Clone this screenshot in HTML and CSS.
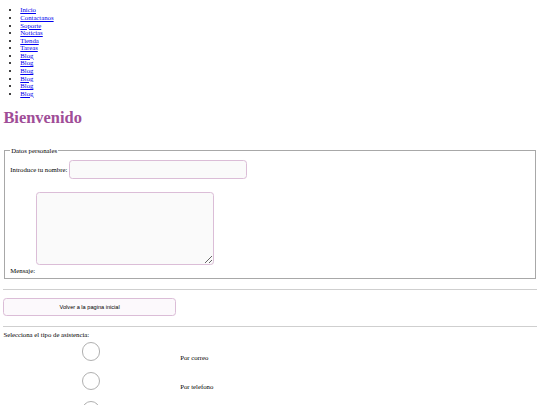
FILE: index.html
```html
<!DOCTYPE html>
<html lang="es">
<head>
<meta charset="utf-8">
<title>Bienvenido</title>
<link rel="stylesheet" href="styles.css">
</head>
<body>
<ul class="menu">
  <li><a href="#">Inicio</a></li>
  <li><a href="#">Contactanos</a></li>
  <li><a href="#">Soporte</a></li>
  <li><a href="#">Noticias</a></li>
  <li><a href="#">Tienda</a></li>
  <li><a href="#">Tareas</a></li>
  <li><a href="#">Blog</a></li>
  <li><a href="#">Blog</a></li>
  <li><a href="#">Blog</a></li>
  <li><a href="#">Blog</a></li>
  <li><a href="#">Blog</a></li>
  <li><a href="#">Blog</a></li>
</ul>
<h1 class="title">Bienvenido</h1>
<form class="form">
  <fieldset class="datos">
    <legend>Datos personales</legend>
    <div class="row-nombre">
      <label for="nombre">Introduce tu nombre:</label>
      <input class="campo" type="text" id="nombre">
    </div>
    <div class="row-mensaje">
      <label for="mensaje">Mensaje:</label>
      <textarea class="area" id="mensaje"></textarea>
    </div>
  </fieldset>
  <hr class="sep sep-1">
  <button class="boton" type="button">Volver a la pagina inicial</button>
  <hr class="sep sep-2">
  <p class="pregunta">Selecciona el tipo de asistencia:</p>
  <div class="opcion">
    <input class="radio" type="radio" name="tipo" id="correo">
    <label for="correo">Por correo</label>
  </div>
  <div class="opcion">
    <input class="radio" type="radio" name="tipo" id="telefono">
    <label for="telefono">Por telefono</label>
  </div>
  <div class="opcion">
    <input class="radio" type="radio" name="tipo" id="chat">
    <label for="chat">Por chat</label>
  </div>
</form>
</body>
</html>
```

FILE: styles.css
```css
html {
  zoom: 0.421875;
}

body {
  margin: 8px;
  font-family: "Liberation Serif", "Times New Roman", serif;
  font-size: 16px;
  color: #000;
  background: #fff;
}

.menu {
  margin: 7px 0 0;
  padding-left: 40px;
  line-height: 18px;
}

.menu a {
  color: #0000ee;
}

.title {
  margin: 25px 0 46px;
  font-size: 39px;
  line-height: 46px;
  font-weight: bold;
  color: #a04d97;
}

.form {
  margin: 0;
}

.datos {
  margin: 0 2px;
  padding: 5px 12px 8px;
  border: 2px solid #a8a8a8;
}

.datos legend {
  padding: 0 2px;
}

.row-nombre {
  display: flex;
  align-items: center;
  gap: 3px;
  margin-top: 9px;
}

.campo {
  box-sizing: border-box;
  width: 424px;
  height: 45px;
  margin: 0;
  border: 2px solid #dbbdd7;
  border-radius: 8px;
  background: #fafafa;
}

.row-mensaje {
  display: flex;
  align-items: flex-end;
  gap: 2px;
  margin-top: 32px;
}

.area {
  box-sizing: border-box;
  width: 422px;
  height: 172px;
  margin: 0 0 23px;
  border: 2px solid #dbbdd7;
  border-radius: 8px;
  background: #fafafa;
}

.sep {
  height: 0;
  border: none;
  border-top: 2px solid #cfcfcf;
}

.sep-1 {
  margin: 25px 0 17px;
}

.sep-2 {
  margin: 25px 0 8px;
}

.boton {
  box-sizing: border-box;
  width: 409px;
  height: 43px;
  margin: 0;
  border: 2px solid #dbbdd7;
  border-radius: 8px;
  background: #fcf9fc;
  font-family: "Liberation Sans", Arial, sans-serif;
  font-size: 13.33px;
  color: #000;
}

.pregunta {
  margin: 0;
  line-height: 18px;
}

.opcion {
  display: flex;
  align-items: flex-end;
  margin-top: 26px;
}

.opcion:first-of-type {
  margin-top: 10px;
}

.radio {
  appearance: none;
  box-sizing: border-box;
  flex: none;
  width: 43px;
  height: 43px;
  margin: 0 190px 0 186px;
  border: 2px solid #b0b0b0;
  border-radius: 50%;
  background: #fff;
}

.opcion label {
  line-height: 18px;
  margin-bottom: -2px;
}
```
